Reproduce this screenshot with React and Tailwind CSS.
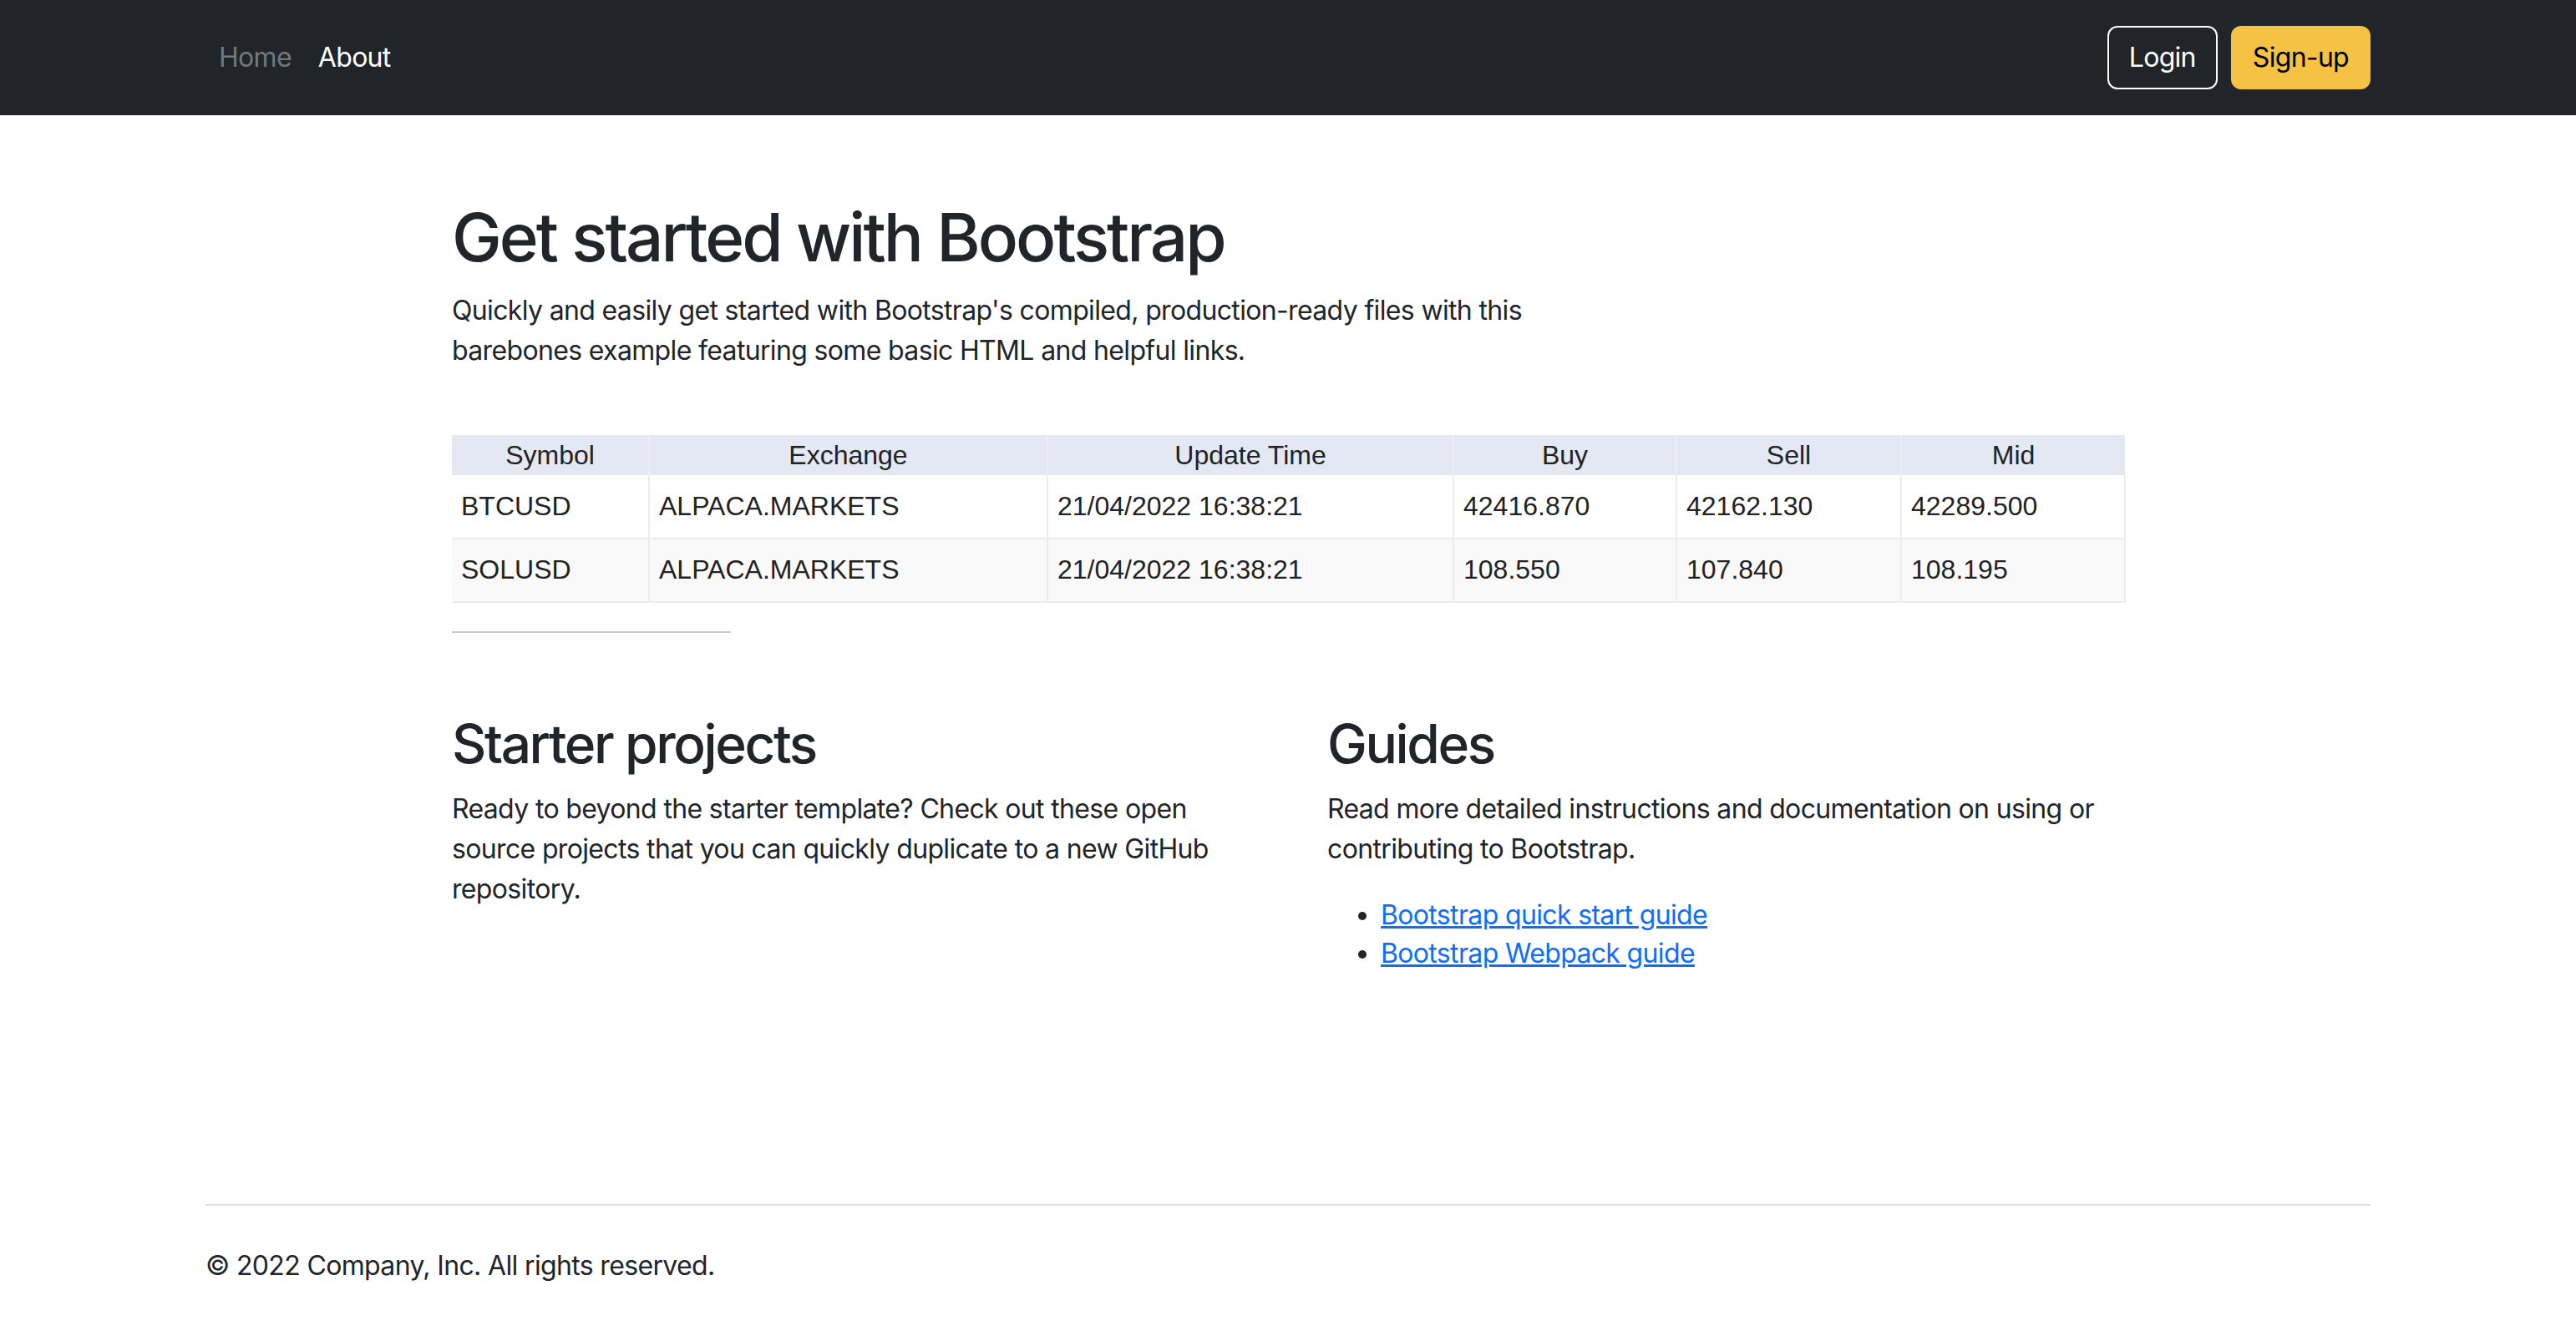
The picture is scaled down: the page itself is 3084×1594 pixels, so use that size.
import React from 'react'

const quotes = [
  { symbol: 'BTCUSD', exchange: 'ALPACA.MARKETS', time: '21/04/2022 16:38:21', buy: '42416.870', sell: '42162.130', mid: '42289.500' },
  { symbol: 'SOLUSD', exchange: 'ALPACA.MARKETS', time: '21/04/2022 16:38:21', buy: '108.550', sell: '107.840', mid: '108.195' },
]

const columns = [
  { label: 'Symbol', key: 'symbol', width: 'w-[236px]' },
  { label: 'Exchange', key: 'exchange', width: 'w-[477px]' },
  { label: 'Update Time', key: 'time', width: 'w-[486px]' },
  { label: 'Buy', key: 'buy', width: 'w-[267px]' },
  { label: 'Sell', key: 'sell', width: 'w-[269px]' },
  { label: 'Mid', key: 'mid', width: 'w-[268px]' },
]

function Navbar() {
  return (
    <nav className="bg-[#212529] h-[138px]">
      <div className="max-w-[2640px] mx-auto px-6 h-full flex items-center justify-between tracking-[-0.7px]">
        <ul className="flex items-center">
          <li><a href="#" className="block px-4 text-[32px] leading-[48px] text-[#74787d]">Home</a></li>
          <li><a href="#" className="block px-4 text-[32px] leading-[48px] text-white">About</a></li>
        </ul>
        <div className="flex items-center gap-4">
          <button className="h-[76px] px-[24px] border-2 border-white rounded-[12px] text-white text-[32px] leading-[48px]">
            Login
          </button>
          <button className="h-[76px] px-[26px] bg-[#f5c244] rounded-[12px] text-black text-[32px] leading-[48px]">
            Sign-up
          </button>
        </div>
      </div>
    </nav>
  )
}

function QuoteTable() {
  return (
    <table className="mt-[77px] w-[2003px] border-collapse table-fixed tracking-normal text-[#222] text-[32px]" style={{ fontFamily: '"Liberation Sans", Arial, sans-serif' }}>
      <thead>
        <tr className="bg-[#e4e8f3] h-[47px]">
          {columns.map((c, i) => (
            <th key={c.key} className={`${c.width} font-normal text-center align-middle border-[#eeeff3] ${i < columns.length - 1 ? 'border-r-2' : ''}`}>
              {c.label}
            </th>
          ))}
        </tr>
      </thead>
      <tbody>
        {quotes.map((q, r) => (
          <tr key={q.symbol} className={`h-[76px] border-b-2 border-[#ececec] ${r % 2 ? 'bg-[#f9f9f9]' : 'bg-white'}`}>
            {columns.map((c, i) => (
              <td key={c.key} className={`px-[11px] pb-[2px] align-middle border-[#ececec] ${i > 0 ? 'border-l-2' : ''} ${i === columns.length - 1 ? 'border-r-2' : ''}`}>
                {q[c.key]}
              </td>
            ))}
          </tr>
        ))}
      </tbody>
    </table>
  )
}

export default function App() {
  return (
    <div className="min-h-screen bg-white text-[#212529]" style={{ fontFamily: 'Inter, "Noto Sans", sans-serif' }}>
      <Navbar />

      <div className="w-[2002px] mx-auto pt-[98px] tracking-[-0.65px]">
        <h1 className="text-[80px] leading-[96px] font-medium tracking-[-3px] mb-4">Get started with Bootstrap</h1>
        <p className="text-[32px] leading-[48px] max-w-[1340px]">
          Quickly and easily get started with Bootstrap's compiled, production-ready files with this barebones example featuring some basic HTML and helpful links.
        </p>

        <QuoteTable />

        <hr className="mt-[34px] w-[334px] border-0 h-[2px] bg-[#c8c9ca]" />

        <div className="grid grid-cols-2 gap-x-[96px] mt-[94px] pr-[2px]">
          <div>
            <h2 className="text-[64px] leading-[77px] font-medium tracking-[-2.4px] mb-4">Starter projects</h2>
            <p className="text-[32px] leading-[48px] mb-8">
              Ready to beyond the starter template? Check out these open source projects that you can quickly duplicate to a new GitHub repository.
            </p>
          </div>
          <div>
            <h2 className="text-[64px] leading-[77px] font-medium tracking-[-2.4px] mb-4">Guides</h2>
            <p className="text-[32px] leading-[48px] mb-8">
              Read more detailed instructions and documentation on using or contributing to Bootstrap.
            </p>
            <ul className="list-disc pl-[64px] text-[32px] leading-[46px]">
              <li><a href="#" className="text-[#0d6efd] underline">Bootstrap quick start guide</a></li>
              <li><a href="#" className="text-[#0d6efd] underline">Bootstrap Webpack guide</a></li>
            </ul>
          </div>
        </div>
      </div>

      <footer className="max-w-[2640px] mx-auto px-6 mt-[277px]">
        <div className="border-t-2 border-[#dee2e6] pt-[48px] pb-[40px] text-[32px] leading-[48px] tracking-[-0.65px]">
          © 2022 Company, Inc. All rights reserved.
        </div>
      </footer>
    </div>
  )
}
